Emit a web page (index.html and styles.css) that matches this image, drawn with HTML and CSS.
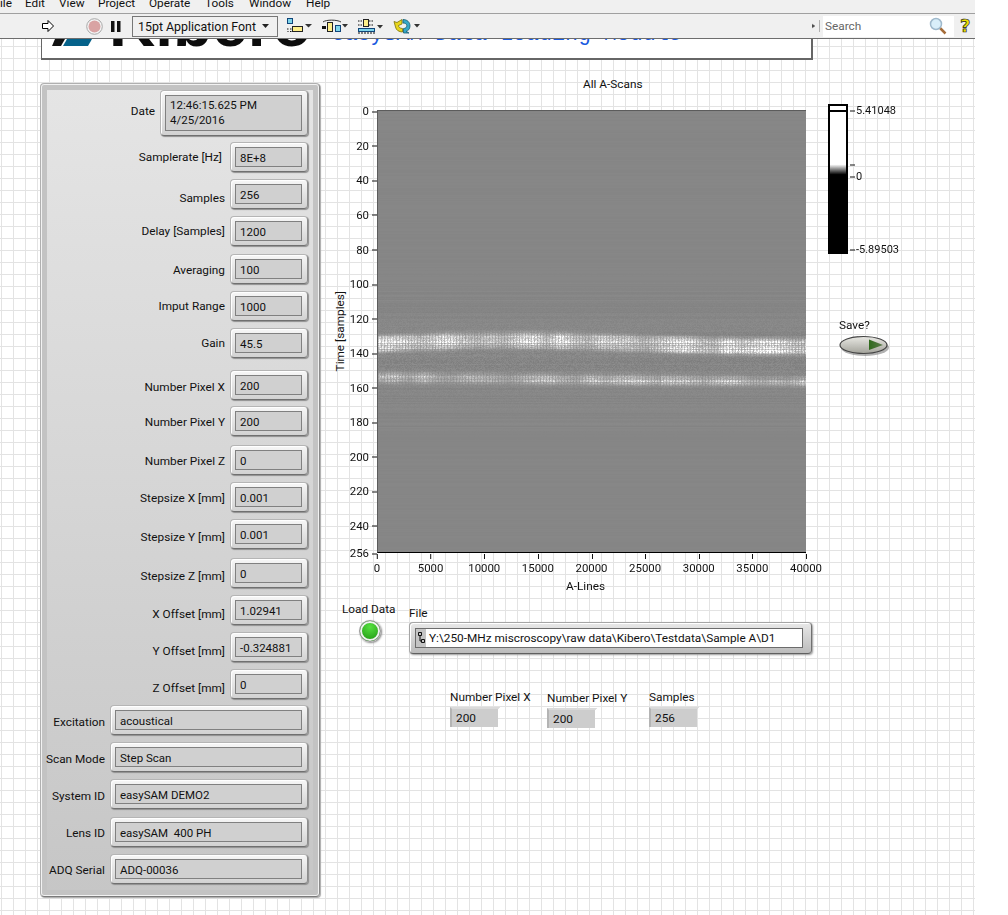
FILE: index.html
```html
<!doctype html>
<html lang="en">
	<head>
		<meta name="viewport" content="width=device-width,initial-scale=1" />
		<title>easySAM Data Loading Module</title>
		<link rel="stylesheet" href="styles.css">
	</head>
	<body>
		<div class="window">
			<nav class="menu">
				<span>ile</span><span>Edit</span><span>View</span><span>Project</span><span>Operate</span><span>Tools</span><span>Window</span><span>Help</span>
			</nav>

			<div class="toolbar">
				<svg class="tool-run" width="14" height="14" viewBox="0 0 14 14"><path d="M1.500 4.500H7V1.500L12.500 7 7 12.500V9.500H1.500Z" fill="#fff" stroke="#000"/></svg>
				<svg class="tool-abort" width="17" height="17" viewBox="0 0 17 17"><circle cx="8.500" cy="8.500" r="7.800" fill="#f4f4f4" stroke="#a8a8a8"/><circle cx="8.500" cy="8.500" r="6" fill="#d9a3a3"/></svg>
				<svg class="tool-pause" width="10" height="11" viewBox="0 0 10 11"><path d="M0 0h3.500v11H0ZM6 0h3.500v11H6Z" fill="#111"/></svg>
				<div class="font-select">
					<span>15pt Application Font</span>
					<svg width="7" height="4" viewBox="0 0 7 4"><path d="M0 0h7L3.500 4Z" fill="#222"/></svg>
				</div>
				<svg class="tool-icon" width="26" height="16" viewBox="0 0 26 16">
					<rect x=".5" y=".5" width="5" height="5" fill="#7fd4ea" stroke="#10457a"/>
					<path d="M0 11h1.500M3 11h1.500" stroke="#111" stroke-width="1.200"/>
					<rect x="5.500" y="8.500" width="10" height="5" fill="#ffef8a" stroke="#222"/>
					<path d="M.5 13.500h1M3 13.500h1.500" stroke="#111"/>
					<path d="M18 6h7l-3.500 3.500Z" fill="#333"/>
				</svg>
				<svg class="tool-icon" width="26" height="16" viewBox="0 0 26 16">
					<path d="M1 4C4 1.500 15 1.500 19 4" fill="none" stroke="#333"/>
					<rect x="0" y="8" width="4" height="3" fill="#111"/>
					<rect x="5.500" y="4.500" width="5" height="9" fill="#ffef8a" stroke="#222"/>
					<rect x="13.500" y="7.500" width="5" height="6" fill="#7fd4ea" stroke="#10457a"/>
					<path d="M20 6h6l-3 3.500Z" fill="#333"/>
				</svg>
				<svg class="tool-icon" width="26" height="16" viewBox="-1 0 26 16">
					<path d="M0 3h5M11 3h5M0 7h5M11 7h5" stroke="#111" stroke-dasharray="1.500 1"/>
					<rect x="5.500" y="1.500" width="5" height="7" fill="#ffef8a" stroke="#222"/>
					<rect x=".5" y="10.500" width="16" height="3" fill="#7fd4ea" stroke="#10457a"/>
					<path d="M0 15h18" stroke="#111" stroke-dasharray="2 1"/>
					<path d="M19 7h6l-3 3.500Z" fill="#333"/>
				</svg>
				<svg class="tool-icon" width="28" height="16" viewBox="-2 0 28 16">
					<path d="M8 1.500L3 4.500 0 3.500 1.500 9C2 12 5 14 8.500 14V10.500C6 10.500 4.500 9 4.500 7.500L8 6Z" fill="#e8d61c" stroke="#77700a" stroke-width=".8"/>
					<path d="M9 1.500C13 1.500 16 4 16 8 16 11 14 13 12 13.500L15 15H9.500V10.500C11.500 10.500 12.800 9.500 12.800 7.500 12.800 6 11 5 9 5Z" fill="#35a8c8" stroke="#155a70" stroke-width=".8"/>
					<path d="M20 6h6l-3 3.500Z" fill="#333"/>
				</svg>
				<span class="toolbar-fill"></span>
				<svg class="tool-grip" width="9" height="12" viewBox="0 0 9 12"><path d="M0 4l3 2-3 2ZM7.500 0v12" fill="#333" stroke="#888" stroke-width=".6"/></svg>
				<div class="search">
					<span>Search</span>
					<svg width="18" height="18" viewBox="0 0 18 18"><path d="M10.500 10.500l6 6" stroke="#a56d3a" stroke-width="2.500"/><circle cx="7" cy="7" r="5.500" fill="#d9effa" stroke="#9fb9cc" stroke-width="1.500"/></svg>
				</div>
				<span class="help">?</span>
			</div>

			<main class="canvas">
				<header class="banner">
					<svg class="logo-mark" width="40" height="8" viewBox="0 0 40 8"><path d="M0 7L3 0H13L9 7Z" fill="#111"/><path d="M11 7L15 0H40L36 7Z" fill="#05628a"/></svg>
					<span class="logo-text">Kibero</span>
					<span class="banner-title">easySAM Data Loading Module</span>
				</header>

				<div class="front">
					<section class="panel">
						<div class="row g0"><span class="label high">Date</span><div class="field field-date"><div class="value">12:46:15.625 PM<br>4/25/2016</div></div></div>
						<div class="row g6"><span class="label nudge">Samplerate [Hz]</span><div class="field"><div class="value">8E+8</div></div></div>
						<div class="row"><span class="label low4">Samples</span><div class="field"><div class="value">256</div></div></div>
						<div class="row"><span class="label">Delay [Samples]</span><div class="field"><div class="value">1200</div></div></div>
						<div class="row g8"><span class="label low1">Averaging</span><div class="field"><div class="value">100</div></div></div>
						<div class="row"><span class="label">Imput Range</span><div class="field"><div class="value">1000</div></div></div>
						<div class="row"><span class="label">Gain</span><div class="field"><div class="value">45.5</div></div></div>
						<div class="row g12"><span class="label low2">Number Pixel X</span><div class="field"><div class="value">200</div></div></div>
						<div class="row g6"><span class="label low1">Number Pixel Y</span><div class="field"><div class="value">200</div></div></div>
						<div class="row g9"><span class="label low1">Number Pixel Z</span><div class="field"><div class="value">0</div></div></div>
						<div class="row"><span class="label low1">Stepsize X [mm]</span><div class="field"><div class="value">0.001</div></div></div>
						<div class="row"><span class="label low3">Stepsize Y [mm]</span><div class="field"><div class="value">0.001</div></div></div>
						<div class="row g9"><span class="label low3">Stepsize Z [mm]</span><div class="field"><div class="value">0</div></div></div>
						<div class="row"><span class="label low4">X Offset [mm]</span><div class="field"><div class="value">1.02941</div></div></div>
						<div class="row"><span class="label low4">Y Offset [mm]</span><div class="field"><div class="value">-0.324881</div></div></div>
						<div class="row"><span class="label low4">Z Offset [mm]</span><div class="field"><div class="value">0</div></div></div>
						<div class="row g6"><span class="label low2">Excitation</span><div class="field field-wide"><div class="value">acoustical</div></div></div>
						<div class="row"><span class="label low2">Scan Mode</span><div class="field field-wide"><div class="value">Step Scan</div></div></div>
						<div class="row"><span class="label low2">System ID</span><div class="field field-wide"><div class="value">easySAM DEMO2</div></div></div>
						<div class="row g8"><span class="label low1">Lens ID</span><div class="field field-wide"><div class="value">easySAM&nbsp; 400 PH</div></div></div>
						<div class="row"><span class="label low1">ADQ Serial</span><div class="field field-wide"><div class="value">ADQ-00036</div></div></div>
					</section>

					<section class="scope">
						<h2 class="graph-title">All A-Scans</h2>
						<div class="graph-row">
							<div class="graph">
								<div class="y-title"><span>Time [samples]</span></div>
								<div class="y-axis" id="y-axis"></div>
								<canvas class="plot" id="plot" width="428" height="441"></canvas>
								<div class="x-axis" id="x-axis"></div>
								<div class="x-title">A-Lines</div>
							</div>
							<aside class="side">
								<div class="ramp">
									<div class="ramp-bar"></div>
									<div class="ramp-scale">
										<span class="ramp-tick ramp-top">5.41048</span>
										<span class="ramp-tick ramp-mark"></span>
										<span class="ramp-tick ramp-zero">0</span>
										<span class="ramp-tick ramp-low">-5.89503</span>
									</div>
								</div>
								<div class="save">
									<span>Save?</span>
									<svg width="52" height="24" viewBox="0 0 52 24">
										<defs>
											<linearGradient id="save-face" x1="0" y1="0" x2="0" y2="1"><stop offset="0" stop-color="#e9e9e4"/><stop offset="1" stop-color="#a2a29a"/></linearGradient>
											<linearGradient id="save-arrow" x1="0" y1="0" x2="1" y2="0"><stop offset="0" stop-color="#2f6a1c"/><stop offset="1" stop-color="#5d7a4c"/></linearGradient>
										</defs>
										<ellipse cx="26" cy="12.500" rx="24" ry="8.500" fill="#7d7d7d" opacity=".6"/>
										<ellipse cx="24.500" cy="10" rx="23.500" ry="8.500" fill="url(#save-face)" stroke="#444" stroke-width="1.200"/>
										<path d="M30 4.500L44 10 30 15Z" fill="url(#save-arrow)"/>
									</svg>
								</div>
							</aside>
						</div>

						<div class="load-row">
							<div class="load">
								<span>Load Data</span>
								<div class="led"></div>
							</div>
							<div class="file">
								<span>File</span>
								<div class="path-box">
									<div class="path-inner">
										<svg class="path-icon" width="10" height="18" viewBox="0 0 10 18"><rect width="10" height="18" fill="#c4c4c4"/><path d="M2.500 3.500h3v3h-3ZM5.500 10.500h3v3h-3ZM4 6.500v5.500h1.500" fill="none" stroke="#111"/></svg>
										<span>Y:\250-MHz miscroscopy\raw data\Kibero\Testdata\Sample A\D1</span>
									</div>
								</div>
							</div>
						</div>

						<div class="readouts">
							<div class="readout readout-x"><span>Number Pixel X</span><div class="readout-box">200</div></div>
							<div class="readout readout-y"><span>Number Pixel Y</span><div class="readout-box">200</div></div>
							<div class="readout"><span>Samples</span><div class="readout-box">256</div></div>
						</div>
					</section>
				</div>
			</main>
		</div>
		<script src="plot.js"></script>
	</body>
</html>
```

FILE: styles.css
```css
* {
	box-sizing: border-box;
}

html,
body {
	margin: 0;
	height: 915px;
	overflow: hidden;
	background: #fff;
}

body {
	font: 11.8px/15px Roboto, "Liberation Sans", sans-serif;
	color: #111;
}

.window {
	display: flex;
	flex-direction: column;
	width: 975px;
	height: 915px;
	overflow: hidden;
}

/* title bars */
.menu {
	display: grid;
	grid-template-columns: 25px 34px 39px 51px 56px 44px 57px auto;
	flex: none;
	height: 14px;
	overflow: hidden;
	border-bottom: 1px solid #a0a0a0;
	background: #f0f0f0;

	& span {
		margin-top: -4px;
	}
}

.toolbar {
	display: flex;
	flex: none;
	align-items: center;
	height: 25px;
	padding-left: 41px;
	border-bottom: 1px solid #6d6d6d;
	background: #f0f0f0;
}

.tool-abort {
	margin-left: 31px;
}

.tool-pause {
	margin-left: 8px;
}

.font-select {
	display: flex;
	align-items: center;
	justify-content: space-between;
	width: 146px;
	height: 21px;
	margin-left: 11px;
	padding: 0 8px 0 5px;
	border: 1px solid #777;
	font-size: 12.4px;
}

.tool-icon {
	margin-left: 9px;
}

.toolbar-fill {
	flex: 1;
}

.tool-grip {
	margin-right: 2px;
}

.search {
	display: flex;
	align-items: center;
	justify-content: space-between;
	width: 131px;
	height: 21px;
	padding: 0 7px 0 2px;
	background: #fff;
	color: #666;

	& span {
		padding-top: 1px;
	}
}

.help {
	width: 21px;
	padding-left: 6px;
	color: #ecdf00;
	font: 700 18px/20px "DejaVu Sans", sans-serif;
	-webkit-text-stroke: .7px #222;
}

/* front panel */
.canvas {
	flex: 1;
	overflow: hidden;
	padding-left: 41px;
	background-color: #fff;
	background-image:
		linear-gradient(to right, #e3e3e3 1px, transparent 1px),
		linear-gradient(to bottom, #e3e3e3 1px, transparent 1px);
	background-position: 1px 7px;
	background-size: 12px 12px;
}

.banner {
	display: flex;
	align-items: flex-start;
	width: 772px;
	height: 21px;
	overflow: hidden;
	border: solid #666;
	border-width: 0 2px 2px 1px;
	background: #fff;
}

.logo-mark {
	flex: none;
	margin-left: 10px;
}

.logo-text {
	margin: -47px 0 0 17px;
	color: #0c0c0c;
	font: 700 64px/64px "Liberation Sans", sans-serif;
}

.banner-title {
	margin: -16px 0 0 20px;
	color: #1a5ae0;
	font: 21.6px/22px "Liberation Mono", monospace;
	white-space: nowrap;
}

.front {
	display: flex;
	align-items: flex-start;
	margin: 16px 0 0 -1px;
}

.panel {
	display: flex;
	flex: none;
	flex-direction: column;
	width: 280px;
	height: 814px;
	margin-top: 7px;
	padding: 6px 11px 0 7px;
	border: 1px solid #8a8a8a;
	border-color: #b0b0b0 #8a8a8a #7a7a7a #b0b0b0;
	border-radius: 4px;
	background: linear-gradient(#e5e5e5, #c6c6c6) padding-box;
	box-shadow: inset 0 0 0 1px #f2f2f2, inset 0 0 0 6px #c3c3c3, 1px 1px 1px #aaa;
}

.row {
	display: flex;
	flex: none;
	gap: 5px;
	align-items: center;
	justify-content: flex-end;
	height: 30px;
	margin-top: 7px;
}

.g0 {
	height: 46px;
	margin-top: 0;
}

.g6 {
	margin-top: 6px;
}

.g8 {
	margin-top: 8px;
}

.g9 {
	margin-top: 9px;
}

.g12 {
	margin-top: 12px;
}

.label {
	white-space: nowrap;
}

.high {
	padding-bottom: 4px;
}

.nudge {
	margin-right: 3px;
}

.low1 {
	padding-top: 2px;
}

.low2 {
	padding-top: 4px;
}

.low3 {
	padding-top: 6px;
}

.low4 {
	padding-top: 8px;
}

.field {
	flex: none;
	width: 78px;
	height: 30px;
	padding: 4px 5px 4px 4px;
	border: 1px solid #a5a5a5;
	border-color: #b5b5b5 #8d8d8d #707070 #b5b5b5;
	border-radius: 4px;
	background: linear-gradient(#f7f7f7, #d2d2d2);
	box-shadow: inset 1px 1px 0 #fff, 1px 1px 1px #8f8f8f;
}

.field-date {
	width: 148px;
	height: 46px;

	& .value {
		padding-top: 2px;
	}
}

.field-wide {
	width: 198px;
}

.value {
	height: 100%;
	padding: 3px 0 0 4px;
	overflow: hidden;
	border: 1px solid #808080;
	background: #d0d0d0;
	font-size: 11.5px;
	white-space: nowrap;
}

/* graph */
.scope {
	flex: none;
	width: 645px;
	margin-left: 10px;
}

.graph-title {
	height: 16px;
	margin: 0;
	padding: 1px 0 0 253px;
	font: inherit;
}

.graph-row {
	display: flex;
	align-items: flex-start;
	margin-top: 12px;
}

.graph {
	display: grid;
	flex: none;
	grid-template-columns: 20px 27px 429px;
	grid-template-rows: 443px 25px 15px;
	margin-top: 6px;
}

.y-title {
	display: flex;
	align-items: center;
	justify-content: center;
	writing-mode: vertical-rl;

	& span {
		transform: rotate(180deg);
	}
}

.y-axis,
.x-axis {
	position: relative;
	font-size: 11.4px;
}

.x-axis {
	grid-column: 3;
}

.axis-y-tick {
	position: absolute;
	right: 0;
	transform: translateY(-50%);
	white-space: nowrap;

	&::after {
		content: "";
		display: inline-block;
		width: 5px;
		height: 1px;
		margin-left: 3px;
		background: #111;
		vertical-align: middle;
	}
}

.axis-x-tick {
	position: absolute;
	top: 0;
	padding-top: 8px;
	transform: translateX(-50%);

	&::before {
		content: "";
		position: absolute;
		top: 1px;
		left: 50%;
		width: 1px;
		height: 5px;
		background: #111;
	}
}

.plot {
	display: block;
	box-sizing: content-box;
	border-top: 1px solid #5c5c5c;
	border-left: 1px solid #5c5c5c;
	border-bottom: 1px solid #000;
}

.x-title {
	grid-column: 3;
	padding: 1px 0 0 189px;
}

.side {
	flex: none;
	margin-left: 22px;
}

.ramp {
	display: flex;
	height: 150px;
}

.ramp-bar {
	width: 20px;
	border: 2px solid #000;
	background:
		linear-gradient(#000, #000) 0 4px / 100% 2px no-repeat,
		linear-gradient(#fff 40%, #000 47%);
}

.ramp-scale {
	position: relative;
	flex: 1;
	font-size: 11px;
}

.ramp-tick {
	position: absolute;
	left: 2px;
	transform: translateY(-50%);
	white-space: nowrap;

	&::before {
		content: "";
		display: inline-block;
		width: 5px;
		height: 1px;
		margin-right: 1px;
		background: #111;
		vertical-align: middle;
	}
}

.ramp-top {
	top: 6px;
}

.ramp-mark {
	top: 60px;
}

.ramp-zero {
	top: 72px;
}

.ramp-low {
	top: 145px;
}

.save {
	display: flex;
	flex-direction: column;
	margin: 64px 0 0 11px;

	& svg {
		margin-top: 2px;
	}
}

/* bottom controls */
.load-row {
	display: flex;
	margin: 9px 0 0 12px;
}

.load {
	display: flex;
	flex-direction: column;
	width: 57px;
}

.led {
	width: 22px;
	height: 22px;
	margin: 3px 0 0 17px;
	border: 1px solid #9a9a9a;
	border-radius: 50%;
	background: radial-gradient(circle at 50% 30%, #55e03f, #2aa51b 70%);
	box-shadow: inset 0 0 0 2px #f1f1f1, 1px 1px 2px #888;
}

.file {
	margin-left: 10px;
	padding-top: 4px;
}

.path-box {
	width: 403px;
	height: 32px;
	margin-top: 1px;
	padding: 5px 8px 5px 5px;
	border: 1px solid #8a8a8a;
	border-color: #a5a5a5 #707070 #606060 #a5a5a5;
	border-radius: 4px;
	background: linear-gradient(#e8e8e8, #bcbcbc);
	box-shadow: inset 1px 1px 0 #fff, 1px 1px 2px #999;
}

.path-inner {
	display: flex;
	align-items: center;
	gap: 3px;
	height: 20px;
	border: 1px solid #6c6c6c;
	background: #fff;
	white-space: nowrap;
}

.path-icon {
	flex: none;
}

.readouts {
	display: flex;
	margin: 36px 0 0 120px;
}

.readout {
	display: flex;
	flex-direction: column;
	gap: 2px;
	white-space: nowrap;
}

.readout-x {
	width: 97px;
}

.readout-y {
	width: 102px;
	margin-top: 1px;
}

.readout-box {
	width: 50px;
	height: 20px;
	padding: 2px 0 0 4px;
	border-top: 2px solid #dadada;
	border-left: 2px solid #b4b4b4;
	background: #cdcdcd;
	clip-path: polygon(0 0, 100% 0, 96% 10%, 96% 100%, 0 100%);
}
```

FILE: plot.js
```js
// draws the A-scan image and the axis ticks
var canvas = document.getElementById('plot');
var ctx = canvas.getContext('2d');
var W = canvas.width;
var H = canvas.height;

var seed = 12345;
function rnd() {
	seed = (seed * 16807) % 2147483647;
	return seed / 2147483647;
}

var rowNoise = [];
var rowGain = [];
for (var y = 0; y < H; y++) {
	var near = y > 170 && y < 320;
	rowNoise.push((rnd() - 0.5) * (near ? 6 : 2.5));
	rowGain.push(0.6 + rnd() * 0.8);
}

// slow wander of the reflections, sampled every 14 px
var wander = [];
for (var k = 0; k < 34; k++) {
	wander.push(rnd());
}
function smooth(x) {
	var p = x / 14;
	var i = Math.floor(p);
	var t = p - i;
	return wander[i] * (1 - t) + wander[i + 1] * t;
}

var img = ctx.createImageData(W, H);
for (var y = 0; y < H; y++) {
	for (var x = 0; x < W; x++) {
		var v = 134 + rowNoise[y];
		var s = smooth(x);
		var comb = x % 3 === 0 ? 0.6 : 1;
		// main reflection, rises a little in the middle
		var c1 = 232 - 3 * Math.sin(x / W * Math.PI * 1.6);
		var d1 = (y - c1) / 8;
		var band1 = Math.exp(-d1 * d1 * d1 * d1) * (50 + 70 * s) * rowGain[y];
		// second thin reflection, drops slowly to the right
		var c2 = 266 + 4 * x / W;
		var d2 = (y - c2) / 4.5;
		var band2 = Math.exp(-d2 * d2) * (35 + 60 * smooth((x + 137) % 420)) * rowGain[(y * 7) % H];
		var haze = Math.exp(-Math.pow((y - 245) / 42, 2)) * 14;
		v += (band1 + band2) * comb * (0.6 + rnd() * 0.6);
		v += (rnd() - 0.5) * haze;
		var i = (y * W + x) * 4;
		img.data[i] = v;
		img.data[i + 1] = v;
		img.data[i + 2] = v;
		img.data[i + 3] = 255;
	}
}
ctx.putImageData(img, 0, 0);

var yAxis = document.getElementById('y-axis');
[0, 20, 40, 60, 80, 100, 120, 140, 160, 180, 200, 220, 240, 256].forEach(function (v) {
	var el = document.createElement('span');
	el.className = 'axis-y-tick';
	el.textContent = v;
	el.style.top = (1.4 + v * 1.7266) + 'px';
	yAxis.appendChild(el);
});

var xAxis = document.getElementById('x-axis');
for (var v = 0; v <= 40000; v += 5000) {
	var el = document.createElement('span');
	el.className = 'axis-x-tick';
	el.textContent = v;
	el.style.left = (v / 40000 * 429) + 'px';
	xAxis.appendChild(el);
}
```
